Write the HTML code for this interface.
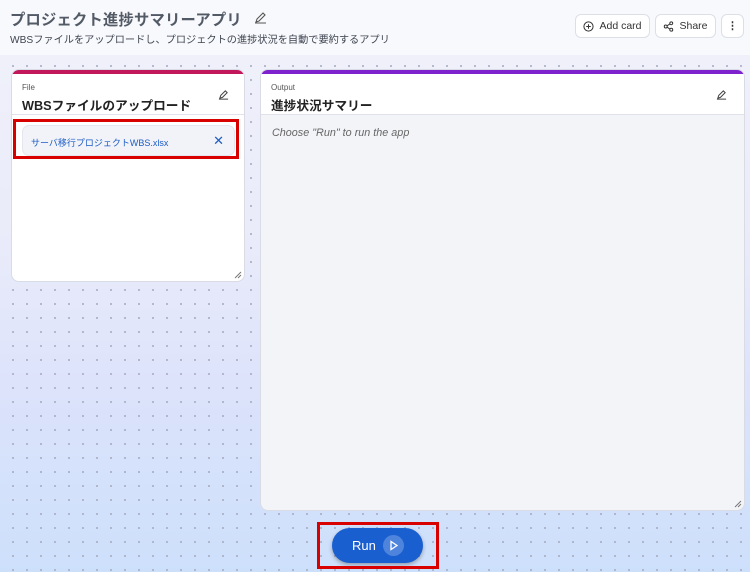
<!DOCTYPE html>
<html><head><meta charset="utf-8"><style>
*{box-sizing:border-box;margin:0;padding:0}
body{width:750px;height:572px;overflow:hidden;font-family:"Liberation Sans","Noto Sans CJK JP",sans-serif;position:relative;
background:linear-gradient(#eff0fa 60px,#e9ebfa 250px,#dde3fb 380px,#cde0fb 572px);}
.dots{position:absolute;left:0;top:55px;width:750px;height:517px;background-image:radial-gradient(circle,#a9afc4 0.8px,transparent 1.2px);background-size:14px 14px;background-position:6px 4px}
.hdr{position:absolute;left:0;top:0;width:750px;height:55px;background:#f8f9fc}
h1{position:absolute;left:10px;top:8px;font-size:15.3px;color:#525a66;font-weight:700;letter-spacing:.2px}
.sub{position:absolute;left:10px;top:31px;font-size:10.2px;color:#3e4450}
.btn{position:absolute;top:14px;height:24px;border:1px solid #dcdfe6;border-radius:6px;background:#fff;font-size:10.5px;color:#333;display:flex;align-items:center;justify-content:center;gap:5px}
.card{position:absolute;background:#fff;border-radius:8px;border:1px solid #d9dce4;overflow:hidden}
.card .top{height:4px}
.lbl{position:absolute;left:10px;top:13px;font-size:8px;color:#555}
.ttl{position:absolute;left:10px;top:25px;font-size:12.7px;font-weight:700;color:#222}
.sep{position:absolute;left:0;right:0;top:44px;border-top:1px solid #dfe2ea}
.red{position:absolute;border:3px solid #d90000}
</style></head><body>
<div class="hdr"></div>
<div class="dots"></div>
<h1>プロジェクト進捗サマリーアプリ</h1>
<svg style="position:absolute;left:254px;top:11px" width="13" height="13" viewBox="0 0 13 13" fill="none" stroke="#555" stroke-width="1.1"><path d="M2 11l1-3 6-6 2 2-6 6z M1 12h11"/></svg>
<div class="sub">WBSファイルをアップロードし、プロジェクトの進捗状況を自動で要約するアプリ</div>
<div class="btn" style="left:575px;width:75px"><svg width="11" height="11" viewBox="0 0 12 12" fill="none" stroke="#333" stroke-width="1.1"><circle cx="6" cy="6" r="5"/><path d="M6 3.5v5M3.5 6h5"/></svg>Add card</div>
<div class="btn" style="left:655px;width:61px"><svg width="11" height="11" viewBox="0 0 12 12" fill="none" stroke="#333" stroke-width="1.1"><circle cx="3" cy="6" r="1.6"/><circle cx="9" cy="2.5" r="1.6"/><circle cx="9" cy="9.5" r="1.6"/><path d="M4.4 5.2l3.2-2M4.4 6.8l3.2 2"/></svg>Share</div>
<div class="btn" style="left:721px;width:23px;font-weight:700">⋮</div>

<div class="card" style="left:11px;top:69px;width:234px;height:213px">
<div class="top" style="background:#c2185b"></div>
<div class="lbl">File</div><div class="ttl">WBSファイルのアップロード</div>
<svg style="position:absolute;left:206px;top:19px" width="11" height="11" viewBox="0 0 12 12" fill="none" stroke="#444" stroke-width="1.1"><path d="M2 10l1-3 5-5 2 2-5 5z M1 11h10"/></svg>
<div class="sep"></div>
<div style="position:absolute;left:10px;top:55px;width:213px;height:31px;background:#f1f3f8;border:1px solid #e3e6ee;border-radius:7px;font-size:9px;color:#1d5cc6;padding:10px 8px">サーバ移行プロジェクトWBS.xlsx<span style="position:absolute;right:10px;top:7px;font-size:13px">✕</span></div>
<svg style="position:absolute;right:2px;bottom:2px" width="8" height="8" viewBox="0 0 8 8" stroke="#777"><path d="M1 7L7 1M4 7L7 4"/></svg>
</div>

<div class="card" style="left:260px;top:69px;width:485px;height:442px;background:#f3f4f8">
<div class="top" style="background:#7e22ce"></div>
<div style="position:absolute;left:0;top:4px;right:0;height:41px;background:#fff"></div>
<div class="lbl">Output</div><div class="ttl">進捗状況サマリー</div>
<svg style="position:absolute;left:455px;top:19px" width="11" height="11" viewBox="0 0 12 12" fill="none" stroke="#444" stroke-width="1.1"><path d="M2 10l1-3 5-5 2 2-5 5z M1 11h10"/></svg>
<div class="sep"></div>
<div style="position:absolute;left:11px;top:57px;font-size:10.8px;font-style:italic;color:#666">Choose "Run" to run the app</div>
<svg style="position:absolute;right:2px;bottom:2px" width="8" height="8" viewBox="0 0 8 8" stroke="#777"><path d="M1 7L7 1M4 7L7 4"/></svg>
</div>

<div class="red" style="left:13px;top:119px;width:226px;height:40px"></div>

<div style="position:absolute;left:332px;top:528px;width:91px;height:35px;border-radius:18px;background:#1a5fd0;box-shadow:0 2px 4px rgba(0,0,0,.3);color:#fff;font-size:13px">
<span style="position:absolute;left:20px;top:10px">Run</span>
<div style="position:absolute;left:51px;top:7px;width:21px;height:21px;border-radius:50%;background:#4f84dd"></div>
<svg style="position:absolute;left:57px;top:12px" width="10" height="11" viewBox="0 0 10 11" fill="none" stroke="#fff" stroke-width="1.3"><path d="M2 1.5v8l6-4z"/></svg>
</div>
<div class="red" style="left:317px;top:522px;width:122px;height:47px"></div>
</body></html>
